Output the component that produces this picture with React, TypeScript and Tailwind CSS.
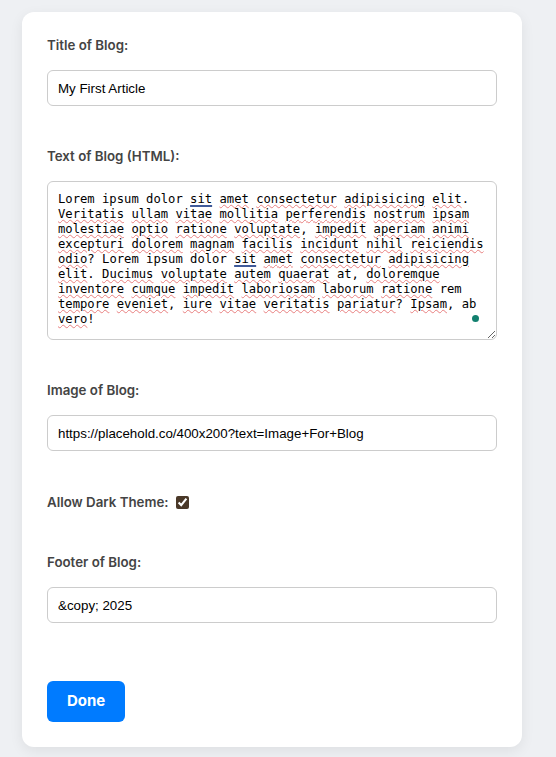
const text =
	'Lorem ipsum dolor sit amet consectetur adipisicing elit. Veritatis ullam vitae mollitia perferendis nostrum ipsam molestiae optio ratione voluptate, impedit aperiam animi excepturi dolorem magnam facilis incidunt nihil reiciendis odio? Lorem ipsum dolor sit amet consectetur adipisicing elit. Ducimus voluptate autem quaerat at, doloremque inventore cumque impedit laboriosam laborum ratione rem tempore eveniet, iure vitae veritatis pariatur? Ipsam, ab vero!';

// words the spellchecker left alone
const known = ['Lorem', 'ipsum', 'dolor', 'at', 'rem', 'ab'];

function Marked() {
	const tokens = text.split(' ');
	return (
		<>
			{tokens.map((tok, i) => {
				const m = tok.match(/^([A-Za-z]+)(.*)$/);
				const word = m ? m[1] : tok;
				const rest = m ? m[2] : '';
				let cls = 'underline decoration-wavy decoration-[#e88080] decoration-1 underline-offset-[1px]';
				if (word === 'sit') {
					cls = 'underline decoration-[#3f5a9a] decoration-2 underline-offset-[2px]';
				} else if (known.includes(word)) {
					cls = '';
				}
				return (
					<span key={i}>
						<span className={cls}>{word}</span>
						{rest}
						{i < tokens.length - 1 ? ' ' : ''}
					</span>
				);
			})}
		</>
	);
}

function Label({ children }: { children: React.ReactNode }) {
	return (
		<label className="block font-['Inter',sans-serif] text-[13.3px] font-semibold leading-[17px] text-[#444]">
			{children}
		</label>
	);
}

function Field({ value }: { value: string }) {
	return (
		<input
			type="text"
			defaultValue={value}
			className="mt-4 block h-9 w-full rounded-md border border-[#ccc] bg-white px-[10px] font-['Liberation_Sans',Arial,sans-serif] text-[13.33px] text-black outline-none"
		/>
	);
}

export default function App() {
	return (
		<div className="min-h-[757px] bg-[#eef0f3] pt-3">
			<form className="ml-[22px] w-[500px] rounded-xl bg-white px-[25px] pt-[25px] pb-[25px] shadow-[0_4px_14px_rgba(0,0,0,0.07)]">
				<div>
					<Label>Title of Blog:</Label>
					<Field value="My First Article" />
				</div>

				<div className="mt-[42px]">
					<Label>Text of Blog (HTML):</Label>
					<div className="relative mt-4">
						<div className="h-[159px] w-full resize overflow-auto rounded-md border border-[#ccc] bg-white p-[10px] font-['DejaVu_Sans_Mono',monospace] text-[12.2px] leading-[15px] text-black">
							<Marked />
						</div>
						<span className="absolute right-[18px] bottom-[18px] h-[7px] w-[7px] rounded-full bg-[#12806f]" />
					</div>
				</div>

				<div className="mt-[42px]">
					<Label>Image of Blog:</Label>
					<Field value="https://placehold.co/400x200?text=Image+For+Blog" />
				</div>

				<div className="mt-[42px] flex h-[19px] items-center">
					<Label>Allow Dark Theme:</Label>
					<input
						type="checkbox"
						defaultChecked
						className="ml-[7px] h-[13px] w-[13px] accent-[#4a3828]"
					/>
				</div>

				<div className="mt-[42px]">
					<Label>Footer of Blog:</Label>
					<Field value={'&copy; 2025'} />
				</div>

				<button
					type="button"
					className="mt-[58px] h-[41px] rounded-md bg-[#007bff] px-5 font-['Inter',sans-serif] text-[15px] font-bold text-white"
				>
					Done
				</button>
			</form>
		</div>
	);
}
